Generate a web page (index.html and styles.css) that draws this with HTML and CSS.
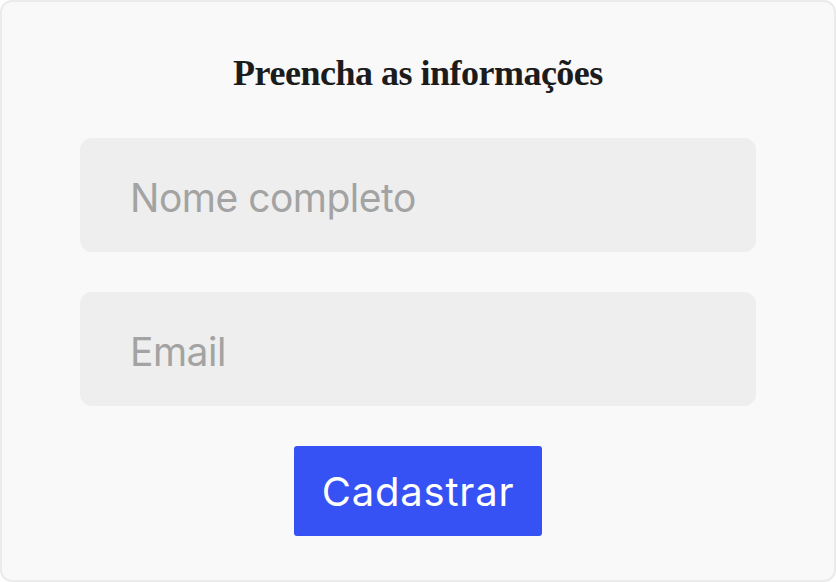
FILE: index.html
```html
<!DOCTYPE html>
<html lang="pt">
<head>
<meta charset="utf-8">
<title>Cadastro</title>
<link rel="stylesheet" href="styles.css">
</head>
<body>
<form class="card">
  <h1 class="title">Preencha as informações</h1>
  <input class="field" type="text" placeholder="Nome completo">
  <input class="field" type="email" placeholder="Email">
  <button class="submit" type="button">Cadastrar</button>
</form>
</body>
</html>
```
FILE: styles.css
```css
html, body {
  margin: 0;
  padding: 0;
  background: #ffffff;
}
.card {
  box-sizing: border-box;
  width: 836px;
  height: 582px;
  margin: 0;
  border: 2px solid #ebebeb;
  border-radius: 12px;
  background: #f9f9f9;
  display: flex;
  flex-direction: column;
  align-items: center;
  gap: 40px;
  padding-top: 51px;
}
.title {
  margin: 0 0 5px;
  height: 40px;
  line-height: 40px;
  font-family: "Liberation Serif", serif;
  font-weight: 700;
  font-size: 36px;
  letter-spacing: -0.5px;
  color: #1c1c1c;
}
.field {
  box-sizing: border-box;
  width: 676px;
  height: 114px;
  border: none;
  border-radius: 12px;
  background: #eeeeee;
  padding: 4px 50px 0;
  font-family: "Inter", sans-serif;
  font-size: 39px;
  letter-spacing: -0.5px;
  color: #333;
  outline: none;
}
.field::placeholder {
  color: #a3a3a3;
}
.submit {
  width: 248px;
  height: 90px;
  border: none;
  border-radius: 3px;
  background: #3652f5;
  color: #ffffff;
  font-family: "Inter", sans-serif;
  font-size: 40px;
  font-weight: 400;
  letter-spacing: 0.8px;
  padding: 0;
}
```
